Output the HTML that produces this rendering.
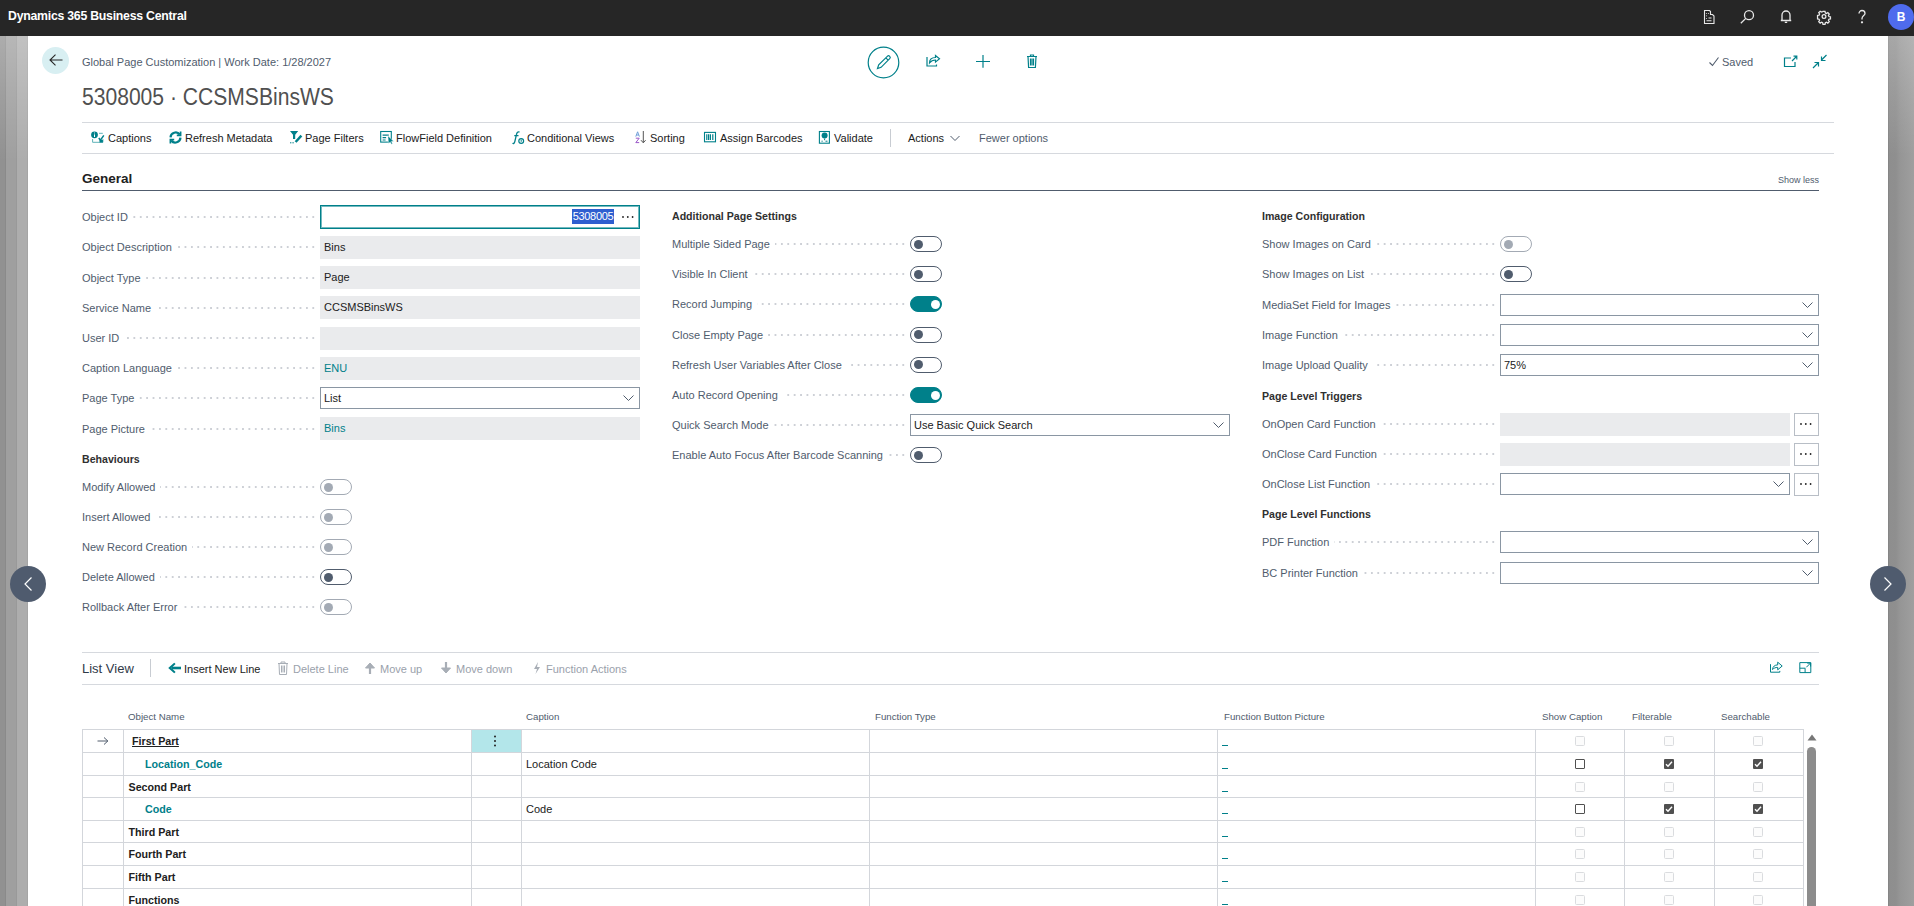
<!DOCTYPE html><html><head><meta charset='utf-8'><style>
*{box-sizing:border-box}
html,body{margin:0;padding:0}
body{width:1914px;height:906px;overflow:hidden;position:relative;background:#fff;font-family:"Liberation Sans",sans-serif;color:#212121;font-size:11px}
.a{position:absolute;white-space:nowrap}
svg.a{overflow:visible}
.lbl{position:absolute;height:16px;line-height:16px;width:234px;white-space:nowrap;
 background-image:radial-gradient(circle at 1px 1px,#cdd0d6 1px,transparent 1.2px);background-size:6.4px 2px;background-repeat:repeat-x;background-position:0.3px center}
.lbl span{background:#fff;color:#505c6d;padding-right:5px;display:inline-block;height:16px}
.fld{position:absolute;width:320px;height:23px;background:#eaebed;line-height:23px;padding-left:4px;color:#212121;white-space:nowrap}
.dd{position:absolute;width:320px;height:22px;border:1px solid #8a96a3;background:#fff;line-height:20px;padding-left:3px;color:#212121;white-space:nowrap}
.sub{position:absolute;font-weight:700;color:#303030;font-size:10.6px;line-height:14px;white-space:nowrap}
.tg{position:absolute;width:32px;height:16px;border-radius:8px;border:1px solid #505c6d;background:#fff}
.tg i{position:absolute;left:3px;top:2.5px;width:9px;height:9px;border-radius:50%;background:#505c6d}
.tg.dis{border-color:#a3aab4}
.tg.dis i{background:#a3aab4;left:2.5px;top:3px}
.tg.on{background:#00808a;border-color:#00808a}
.tg.on i{left:19.5px;top:2.5px;background:#fff}
.hl{position:absolute;height:1px;background:#d6d9de}
.vl{position:absolute;width:1px;background:#d6d9de}
.act{position:absolute;top:130px;height:16px;line-height:16px;color:#212121;white-space:nowrap}
.th{position:absolute;top:711px;font-size:9.7px;color:#505c6d;line-height:12px;white-space:nowrap}
.td{position:absolute;line-height:14px;white-space:nowrap}
</style></head><body>
<div class="a" style="left:0;top:0;width:1914px;height:36px;background:#262626"></div>
<div class="a" style="left:8px;top:8px;font-size:12.3px;font-weight:700;color:#fff;line-height:16px;letter-spacing:-0.25px">Dynamics 365 Business Central</div>
<svg class="a" style="left:1700px;top:8px" width="18" height="18" viewBox="0 0 18 18" fill="none" stroke="#e8e8e8" stroke-width="1.1">
<path d="M4.5 2.5h5l1 1v3h2l1.5 1.5v7.5h-9.5z"/><path d="M6.5 5v.8M6.5 7.5v.8M6.5 10v.8M8.5 5v.8M8.5 10h3M6.5 12.8h5"/></svg>
<svg class="a" style="left:1738px;top:8px" width="18" height="18" viewBox="0 0 18 18" fill="none" stroke="#e8e8e8" stroke-width="1.3">
<circle cx="11" cy="7.2" r="4.5"/><path d="M7.8 10.4L2.8 15.2"/></svg>
<svg class="a" style="left:1777px;top:7px" width="18" height="18" viewBox="0 0 18 18" fill="none" stroke="#e8e8e8" stroke-width="1.3">
<path d="M5 13V8a4 4 0 0 1 8 0v5M3.8 13.5h10.4M7.8 15.3h2.4"/></svg>
<svg class="a" style="left:1815px;top:7.5px;transform:scale(0.85);transform-origin:9px 8.5px" width="18" height="18" viewBox="0 0 18 18" fill="none" stroke="#e8e8e8" stroke-width="1.5">
<circle cx="9" cy="8.5" r="2.2"/><path d="M7.8 2.5h2.4l.4 1.8 1.3.6 1.6-1 1.7 1.7-1 1.6.6 1.3 1.8.4v2.4l-1.8.4-.6 1.3 1 1.6-1.7 1.7-1.6-1-1.3.6-.4 1.8H7.8l-.4-1.8-1.3-.6-1.6 1-1.7-1.7 1-1.6-.6-1.3-1.8-.4V7.3l1.8-.4.6-1.3-1-1.6 1.7-1.7 1.6 1 1.3-.6z"/></svg>
<svg class="a" style="left:1853px;top:8px" width="18" height="18" viewBox="0 0 18 18" fill="none" stroke="#e8e8e8" stroke-width="1.3">
<path d="M6 5.5a3 3 0 0 1 6 0c0 2-3 2.3-3 5v1"/><circle cx="9" cy="14.3" r="0.5" fill="#e8e8e8"/></svg>
<div class="a" style="left:1888px;top:4px;width:26px;height:26px;border-radius:50%;background:#4f6bed;color:#fff;font-weight:700;font-size:12px;line-height:26px;text-align:center">B</div>
<div class="a" style="left:0;top:36px;width:28px;height:870px;background:
linear-gradient(rgba(255,255,255,0.25) 0,rgba(255,255,255,0.12) 60px,rgba(255,255,255,0) 125px),
linear-gradient(90deg,#919191 0,#919191 5px,#8a8a8a 5px,#8a8a8a 6.5px,#9f9f9f 6.5px,#9f9f9f 16.2px,#999 16.2px,#999 17.2px,#adadad 17.2px,#adadad 27px,#a5a5a5 27px)"></div>
<div class="a" style="left:1888px;top:36px;width:26px;height:870px;background:
linear-gradient(rgba(255,255,255,0.22) 0,rgba(255,255,255,0.1) 60px,rgba(255,255,255,0) 120px),
linear-gradient(90deg,#858585 0,#858585 1.2px,#8e8e8e 1.2px,#8f8f8f 8px,#959595 45%,#9f9f9f)"></div>
<div class="a" style="left:41.5px;top:46.5px;width:27px;height:27px;border-radius:50%;background:#d8eff2"></div>
<svg class="a" style="left:41.5px;top:46.5px" width="27" height="27" viewBox="0 0 27 27" fill="none" stroke="#262626" stroke-width="1.1">
<path d="M20.5 13H8M13.5 7.7L8 13l5.5 5.3"/></svg>
<div class="a" style="left:82px;top:55px;font-size:11px;line-height:14px;color:#505c6d">Global Page Customization | Work Date: 1/28/2027</div>
<div class="a" style="left:82px;top:82.5px;font-size:23.5px;line-height:28px;color:#505050;transform:scaleX(0.897);transform-origin:0 0">5308005 · CCSMSBinsWS</div>
<svg class="a" style="left:866px;top:45px" width="36" height="36" viewBox="0 0 36 36" fill="none" stroke="#00808a" stroke-width="1.2">
<circle cx="17.5" cy="17.5" r="15.3"/>
<path d="M11.5 23.5l1.2-3.6 8.6-8.6a1.5 1.5 0 0 1 2.4 2.4l-8.6 8.6z M19.8 12.8l2.4 2.4"/></svg>
<svg class="a" style="left:924px;top:51px" width="18" height="18" viewBox="0 0 18 18" fill="none" stroke="#00808a" stroke-width="1.2">
<path d="M3 6v9h9.5v-1.5"/><path d="M5.5 12c0-3.5 2.5-5.5 6-5.5V4.5l4 3.3-4 3.3V9c-2.5 0-4.5 1-6 3z"/></svg>
<svg class="a" style="left:974px;top:52px" width="18" height="18" viewBox="0 0 18 18" fill="none" stroke="#00808a" stroke-width="1.2">
<path d="M9 3v12.8M2 9.5h14"/></svg>
<svg class="a" style="left:1023px;top:52px" width="18" height="18" viewBox="0 0 18 18" fill="none" stroke="#00808a" stroke-width="1.2">
<path d="M4 4.5h10M7.5 4.5V3h3v1.5M5 4.5l.6 11h6.8l.6-11M7.5 6.5v7M9 6.5v7M10.5 6.5v7"/></svg>
<svg class="a" style="left:1707px;top:54px" width="16" height="16" viewBox="0 0 16 16" fill="none" stroke="#505c6d" stroke-width="1.1">
<path d="M2.5 8.5l3 3 6-8"/></svg>
<div class="a" style="left:1722px;top:55px;font-size:11px;line-height:14px;color:#505c6d">Saved</div>
<svg class="a" style="left:1782px;top:53px" width="18" height="18" viewBox="0 0 18 18" fill="none" stroke="#00808a" stroke-width="1.2">
<path d="M9 5H2.5v8.5h10.5V9"/><path d="M10 8l4.5-4.5M11.5 3.2h3.3v3.3"/></svg>
<svg class="a" style="left:1810px;top:52px" width="20" height="20" viewBox="0 0 20 20" fill="none" stroke="#00808a" stroke-width="1.2">
<path d="M3 16l5-5M4.5 10.5H8.5V14.5M16.5 3l-5 5M11.5 4.5v4h4"/></svg>
<div class="hl" style="left:82px;top:122px;width:1752px"></div>
<div class="hl" style="left:82px;top:153px;width:1752px"></div>
<div class="act" style="left:108px;color:#212121">Captions</div>
<div class="act" style="left:185px;color:#212121">Refresh Metadata</div>
<div class="act" style="left:305px;color:#212121">Page Filters</div>
<div class="act" style="left:396px;color:#212121">FlowField Definition</div>
<div class="act" style="left:527px;color:#212121">Conditional Views</div>
<div class="act" style="left:650px;color:#212121">Sorting</div>
<div class="act" style="left:720px;color:#212121">Assign Barcodes</div>
<div class="act" style="left:834px;color:#212121">Validate</div>
<div class="act" style="left:908px;color:#212121">Actions</div>
<div class="act" style="left:979px;color:#505c6d">Fewer options</div>
<div class="vl" style="left:890px;top:129px;height:18px;background:#c8ccd2"></div>
<svg class="a" style="left:949px;top:134px" width="12" height="8" viewBox="0 0 12 8" fill="none" stroke="#505c6d" stroke-width="1"><path d="M1.5 2l4.5 4.5 4.5-4.5"/></svg>
<svg class="a" style="left:0;top:0" width="1914" height="160" viewBox="0 0 1914 160">
<g>
<circle cx="94.5" cy="134.8" r="3.4" fill="#00808a"/><path d="M94.5 132.6v.8M94.5 134.4v2.6" stroke="#fff" stroke-width="1"/>
<path d="M99 133.3h3.8" stroke="#5fb3b8" stroke-width="1"/>
<path d="M98.8 138l1.6 2.2 3.4-4.8" stroke="#00808a" stroke-width="1.5" fill="none"/>
<path d="M92.6 139v3.3h10.3V139" stroke="#5fb3b8" stroke-width="1" fill="none"/><rect x="99.5" y="140" width="3.4" height="2.5" fill="#00808a"/>
</g>
<g fill="none" stroke="#00808a" stroke-width="2.2">
<path d="M170.5 137.3a5.2 5.2 0 0 1 9.3-2.8M180.5 137.7a5.2 5.2 0 0 1-9.3 2.8"/>
<path d="M180.6 131.5v3.8h-3.8M170.4 143.5v-3.8h3.8" stroke-width="1.7"/>
</g>
<path d="M290 131h8.2l-3 3.8v4.2h-2.2v-4.2z" fill="#00808a"/>
<path d="M301.4 135.6l-5.8 6.4" stroke="#00808a" stroke-width="2.4"/>
<path d="M290 142.8h4.5" stroke="#00808a" stroke-width="1" stroke-dasharray="1.4 1"/>
<rect x="380.7" y="131.5" width="10.6" height="10.6" fill="none" stroke="#00808a" stroke-width="1.1"/>
<path d="M382.6 135.2h6.2M382.6 137.6h3.5M382.6 140h3" stroke="#00808a" stroke-width="1.2"/>
<path d="M387.9 135.8l5.8 5.4-2.4.2 1.3 2.3-1.1.6-1.3-2.3-1.8 1.6z" fill="#00808a" stroke="#fff" stroke-width="0.5"/>
<path d="M519.5 132.2c-1.6-.8-2.6.2-3 2.2l-1.7 7.2c-.4 1.8-1.3 2.3-2.3 1.6M514.3 135.6h4.2" fill="none" stroke="#00808a" stroke-width="1.3"/>
<circle cx="521.2" cy="141" r="2.4" fill="none" stroke="#00808a" stroke-width="1.2"/><path d="M521.2 139.6v2.2" stroke="#00808a" stroke-width="1"/>
<path d="M635.8 136.6l1.8-4.8 1.8 4.8M636.4 135h2.4" fill="none" stroke="#6f9fd8" stroke-width="1"/>
<path d="M635.8 138.2h3.4l-3.4 4.4h3.4" fill="none" stroke="#9b59c9" stroke-width="1"/>
<path d="M643.3 131v11.6M641 140.2l2.3 2.6 2.3-2.6" fill="none" stroke="#555" stroke-width="1"/>
<rect x="704.5" y="132.4" width="11" height="9.4" fill="none" stroke="#00808a" stroke-width="1.1"/>
<path d="M706.8 134.3v5.6M708.6 134.3v5.6M710.4 134.3v5.6M712.8 134.3v5.6" stroke="#00808a" stroke-width="1.2"/>
<rect x="819.4" y="131.5" width="10" height="11.7" fill="none" stroke="#00808a" stroke-width="1.1"/>
<circle cx="824.6" cy="135.6" r="3" fill="#00808a"/><path d="M824.6 138.6v1.6M821.5 141.2h1.2M825.5 141.2h2" stroke="#00808a" stroke-width="1"/>
</svg>
<div class="a" style="left:82px;top:171px;font-size:13.5px;font-weight:700;line-height:16px;color:#212121">General</div>
<div class="a" style="left:82px;top:190px;width:1737px;height:1px;background:#505c6d"></div>
<div class="a" style="left:1778px;top:174px;font-size:9px;line-height:12px;color:#505c6d">Show less</div>
<div class="lbl" style="left:82px;top:209px"><span>Object ID</span></div>
<div class="a" style="left:320px;top:205px;width:320px;height:24px;border:1px solid #00808a;box-shadow:inset 0 0 0 1px rgba(0,128,138,0.55);background:#fff"></div>
<div class="a" style="left:572px;top:209px;width:42px;height:15px;background:#2f5fd0;color:#fff;line-height:15px;font-size:11px;text-align:center;letter-spacing:-0.3px">5308005</div>
<svg class="a" style="left:621px;top:215px" width="14" height="4" viewBox="0 0 14 4"><circle cx="2" cy="2" r="0.9" fill="#212121"/><circle cx="6.8" cy="2" r="0.9" fill="#212121"/><circle cx="11.6" cy="2" r="0.9" fill="#212121"/></svg>
<div class="lbl" style="left:82px;top:239.3px"><span>Object Description</span></div>
<div class="fld" style="left:320px;top:235.8px;width:320px;color:#212121">Bins</div>
<div class="lbl" style="left:82px;top:269.6px"><span>Object Type</span></div>
<div class="fld" style="left:320px;top:266.1px;width:320px;color:#212121">Page</div>
<div class="lbl" style="left:82px;top:299.8px"><span>Service Name</span></div>
<div class="fld" style="left:320px;top:296.3px;width:320px;color:#212121">CCSMSBinsWS</div>
<div class="lbl" style="left:82px;top:330px"><span>User ID</span></div>
<div class="fld" style="left:320px;top:326.5px;width:320px;color:#212121"></div>
<div class="lbl" style="left:82px;top:360px"><span>Caption Language</span></div>
<div class="fld" style="left:320px;top:356.5px;width:320px;color:#00808a">ENU</div>
<div class="lbl" style="left:82px;top:390px"><span>Page Type</span></div>
<div class="dd" style="left:320px;top:387px;width:320px">List<svg class="a" style="right:5px;top:7px" width="11" height="6" viewBox="0 0 11 6" fill="none" stroke="#505c6d" stroke-width="1"><path d="M.5 .5l5 5 5-5"/></svg></div>
<div class="lbl" style="left:82px;top:420.5px"><span>Page Picture</span></div>
<div class="fld" style="left:320px;top:417.0px;width:320px;color:#00808a">Bins</div>
<div class="sub" style="left:82px;top:452px">Behaviours</div>
<div class="lbl" style="left:82px;top:479px"><span>Modify Allowed</span></div>
<div class="tg dis" style="left:320px;top:479px"><i></i></div>
<div class="lbl" style="left:82px;top:509px"><span>Insert Allowed</span></div>
<div class="tg dis" style="left:320px;top:509px"><i></i></div>
<div class="lbl" style="left:82px;top:539px"><span>New Record Creation</span></div>
<div class="tg dis" style="left:320px;top:539px"><i></i></div>
<div class="lbl" style="left:82px;top:569px"><span>Delete Allowed</span></div>
<div class="tg" style="left:320px;top:569px"><i></i></div>
<div class="lbl" style="left:82px;top:599px"><span>Rollback After Error</span></div>
<div class="tg dis" style="left:320px;top:599px"><i></i></div>
<div class="sub" style="left:672px;top:209px">Additional Page Settings</div>
<div class="lbl" style="left:672px;top:236px"><span>Multiple Sided Page</span></div>
<div class="tg" style="left:910px;top:236px"><i></i></div>
<div class="lbl" style="left:672px;top:266px"><span>Visible In Client</span></div>
<div class="tg" style="left:910px;top:266px"><i></i></div>
<div class="lbl" style="left:672px;top:296px"><span>Record Jumping</span></div>
<div class="tg on" style="left:910px;top:296px"><i></i></div>
<div class="lbl" style="left:672px;top:326.5px"><span>Close Empty Page</span></div>
<div class="tg" style="left:910px;top:326.5px"><i></i></div>
<div class="lbl" style="left:672px;top:356.5px"><span>Refresh User Variables After Close</span></div>
<div class="tg" style="left:910px;top:356.5px"><i></i></div>
<div class="lbl" style="left:672px;top:387px"><span>Auto Record Opening</span></div>
<div class="tg on" style="left:910px;top:387px"><i></i></div>
<div class="lbl" style="left:672px;top:417px"><span>Quick Search Mode</span></div>
<div class="dd" style="left:910px;top:414px;width:320px">Use Basic Quick Search<svg class="a" style="right:5px;top:7px" width="11" height="6" viewBox="0 0 11 6" fill="none" stroke="#505c6d" stroke-width="1"><path d="M.5 .5l5 5 5-5"/></svg></div>
<div class="lbl" style="left:672px;top:447px"><span>Enable Auto Focus After Barcode Scanning</span></div>
<div class="tg" style="left:910px;top:447px"><i></i></div>
<div class="sub" style="left:1262px;top:209px">Image Configuration</div>
<div class="lbl" style="left:1262px;top:236px"><span>Show Images on Card</span></div>
<div class="tg dis" style="left:1500px;top:236px"><i></i></div>
<div class="lbl" style="left:1262px;top:266px"><span>Show Images on List</span></div>
<div class="tg" style="left:1500px;top:266px"><i></i></div>
<div class="lbl" style="left:1262px;top:296.5px"><span>MediaSet Field for Images</span></div>
<div class="dd" style="left:1500px;top:293.5px;width:319px"><svg class="a" style="right:5px;top:7px" width="11" height="6" viewBox="0 0 11 6" fill="none" stroke="#505c6d" stroke-width="1"><path d="M.5 .5l5 5 5-5"/></svg></div>
<div class="lbl" style="left:1262px;top:327px"><span>Image Function</span></div>
<div class="dd" style="left:1500px;top:324px;width:319px"><svg class="a" style="right:5px;top:7px" width="11" height="6" viewBox="0 0 11 6" fill="none" stroke="#505c6d" stroke-width="1"><path d="M.5 .5l5 5 5-5"/></svg></div>
<div class="lbl" style="left:1262px;top:357px"><span>Image Upload Quality</span></div>
<div class="dd" style="left:1500px;top:354px;width:319px">75%<svg class="a" style="right:5px;top:7px" width="11" height="6" viewBox="0 0 11 6" fill="none" stroke="#505c6d" stroke-width="1"><path d="M.5 .5l5 5 5-5"/></svg></div>
<div class="sub" style="left:1262px;top:389px">Page Level Triggers</div>
<div class="lbl" style="left:1262px;top:416px"><span>OnOpen Card Function</span></div>
<div class="fld" style="left:1500px;top:412.5px;width:290px;color:#212121"></div>
<div class="a" style="left:1794px;top:412.5px;width:25px;height:23px;border:1px solid #b8bec6;background:#fff"></div>
<svg class="a" style="left:1799px;top:422px" width="14" height="4" viewBox="0 0 14 4"><circle cx="2" cy="2" r="0.9" fill="#212121"/><circle cx="6.8" cy="2" r="0.9" fill="#212121"/><circle cx="11.6" cy="2" r="0.9" fill="#212121"/></svg>
<div class="lbl" style="left:1262px;top:446px"><span>OnClose Card Function</span></div>
<div class="fld" style="left:1500px;top:442.5px;width:290px;color:#212121"></div>
<div class="a" style="left:1794px;top:442.5px;width:25px;height:23px;border:1px solid #b8bec6;background:#fff"></div>
<svg class="a" style="left:1799px;top:452px" width="14" height="4" viewBox="0 0 14 4"><circle cx="2" cy="2" r="0.9" fill="#212121"/><circle cx="6.8" cy="2" r="0.9" fill="#212121"/><circle cx="11.6" cy="2" r="0.9" fill="#212121"/></svg>
<div class="lbl" style="left:1262px;top:476px"><span>OnClose List Function</span></div>
<div class="dd" style="left:1500px;top:473px;width:290px"><svg class="a" style="right:5px;top:7px" width="11" height="6" viewBox="0 0 11 6" fill="none" stroke="#505c6d" stroke-width="1"><path d="M.5 .5l5 5 5-5"/></svg></div>
<div class="a" style="left:1794px;top:472.5px;width:25px;height:23px;border:1px solid #b8bec6;background:#fff"></div>
<svg class="a" style="left:1799px;top:482px" width="14" height="4" viewBox="0 0 14 4"><circle cx="2" cy="2" r="0.9" fill="#212121"/><circle cx="6.8" cy="2" r="0.9" fill="#212121"/><circle cx="11.6" cy="2" r="0.9" fill="#212121"/></svg>
<div class="sub" style="left:1262px;top:507px">Page Level Functions</div>
<div class="lbl" style="left:1262px;top:534px"><span>PDF Function</span></div>
<div class="dd" style="left:1500px;top:531px;width:319px"><svg class="a" style="right:5px;top:7px" width="11" height="6" viewBox="0 0 11 6" fill="none" stroke="#505c6d" stroke-width="1"><path d="M.5 .5l5 5 5-5"/></svg></div>
<div class="lbl" style="left:1262px;top:565px"><span>BC Printer Function</span></div>
<div class="dd" style="left:1500px;top:562px;width:319px"><svg class="a" style="right:5px;top:7px" width="11" height="6" viewBox="0 0 11 6" fill="none" stroke="#505c6d" stroke-width="1"><path d="M.5 .5l5 5 5-5"/></svg></div>
<div class="a" style="left:10px;top:566px;width:36px;height:36px;border-radius:50%;background:#4f5b6e"></div>
<div class="a" style="left:1870px;top:566px;width:36px;height:36px;border-radius:50%;background:#4f5b6e"></div>
<svg class="a" style="left:0;top:0" width="1914" height="906" viewBox="0 0 1914 906" fill="none" stroke="#fff" stroke-width="1.2"><path d="M31.5 577.5l-6.5 6.5 6.5 6.5M1884.5 577.5l6.5 6.5-6.5 6.5"/></svg>
<div class="hl" style="left:82px;top:652px;width:1737px"></div>
<div class="hl" style="left:82px;top:684px;width:1737px"></div>
<div class="a" style="left:82px;top:661px;font-size:13px;line-height:16px;color:#2f3a48">List View</div>
<div class="vl" style="left:150px;top:659px;height:18px;background:#c8ccd2"></div>
<div class="a" style="left:184px;top:662px;line-height:14px;color:#212121">Insert New Line</div>
<div class="a" style="left:293px;top:662px;line-height:14px;color:#9aa1ab">Delete Line</div>
<div class="a" style="left:380px;top:662px;line-height:14px;color:#9aa1ab">Move up</div>
<div class="a" style="left:456px;top:662px;line-height:14px;color:#9aa1ab">Move down</div>
<div class="a" style="left:546px;top:662px;line-height:14px;color:#9aa1ab">Function Actions</div>
<svg class="a" style="left:166px;top:661px" width="16" height="14" viewBox="0 0 16 14"><path d="M15 7H6" stroke="#00808a" stroke-width="2.6"/><path d="M8.2 1.8L2.2 7l6 5.2 1.4-1.3L5.5 7l4.1-3.9z" fill="#00808a"/></svg>
<svg class="a" style="left:276px;top:660px" width="14" height="16" viewBox="0 0 14 16" fill="none" stroke="#a8aeb6" stroke-width="1"><path d="M2 3.5h10M5 3.5V2h4v1.5M3 3.5l.5 11h7l.5-11M5.5 5.5v7M7 5.5v7M8.5 5.5v7"/></svg>
<svg class="a" style="left:363px;top:661px" width="14" height="14" viewBox="0 0 14 14" fill="#a8aeb6" stroke="#a8aeb6" stroke-width="2.2"><path d="M7 13V5" fill="none"/><path d="M2.5 7L7 2l4.5 5z" stroke-width="1"/></svg>
<svg class="a" style="left:439px;top:661px" width="14" height="14" viewBox="0 0 14 14" fill="#a8aeb6" stroke="#a8aeb6" stroke-width="2.2"><path d="M7 1v8" fill="none"/><path d="M2.5 7L7 12l4.5-5z" stroke-width="1"/></svg>
<svg class="a" style="left:531px;top:661px" width="12" height="14" viewBox="0 0 12 14" fill="#a8aeb6"><path d="M7 1L3 8h3l-1.5 5L9 6H6z"/></svg>
<svg class="a" style="left:0;top:0" width="1914" height="906" viewBox="0 0 1914 906" fill="none" stroke="#00808a" stroke-width="1"><path d="M1770.5 664.2v8h9.3v-1.3"/><path d="M1772.5 669.5c.3-3 2.3-4.6 5.2-4.6v-2.7l4.5 3.8-4.5 3.8v-2.4c-2.2 0-3.8.7-5.2 2.1z"/><path d="M1799.8 662.6h11v10h-11z"/><path d="M1799.8 668.2h5.3v4.4M1806.3 667.3l4-4M1807.2 663.1h3.4v3.4"/></svg>
<div class="th" style="left:128px">Object Name</div>
<div class="th" style="left:526px">Caption</div>
<div class="th" style="left:875px">Function Type</div>
<div class="th" style="left:1224px">Function Button Picture</div>
<div class="th" style="left:1542px">Show Caption</div>
<div class="th" style="left:1632px">Filterable</div>
<div class="th" style="left:1721px">Searchable</div>
<div class="hl" style="left:82px;top:729px;width:1721px;background:#d3d6db"></div>
<div class="hl" style="left:82px;top:752px;width:1721px;background:#d3d6db"></div>
<div class="hl" style="left:82px;top:775px;width:1721px;background:#d3d6db"></div>
<div class="hl" style="left:82px;top:797px;width:1721px;background:#d3d6db"></div>
<div class="hl" style="left:82px;top:820px;width:1721px;background:#d3d6db"></div>
<div class="hl" style="left:82px;top:842px;width:1721px;background:#d3d6db"></div>
<div class="hl" style="left:82px;top:865px;width:1721px;background:#d3d6db"></div>
<div class="hl" style="left:82px;top:888px;width:1721px;background:#d3d6db"></div>
<div class="hl" style="left:82px;top:911px;width:1721px;background:#d3d6db"></div>
<div class="vl" style="left:82px;top:729px;height:180px;background:#d3d6db"></div>
<div class="vl" style="left:123px;top:729px;height:180px;background:#d3d6db"></div>
<div class="vl" style="left:471px;top:729px;height:180px;background:#d3d6db"></div>
<div class="vl" style="left:521px;top:729px;height:180px;background:#d3d6db"></div>
<div class="vl" style="left:869px;top:729px;height:180px;background:#d3d6db"></div>
<div class="vl" style="left:1217px;top:729px;height:180px;background:#d3d6db"></div>
<div class="vl" style="left:1535px;top:729px;height:180px;background:#d3d6db"></div>
<div class="vl" style="left:1624px;top:729px;height:180px;background:#d3d6db"></div>
<div class="vl" style="left:1714px;top:729px;height:180px;background:#d3d6db"></div>
<div class="vl" style="left:1803px;top:729px;height:180px;background:#d3d6db"></div>
<div class="a" style="left:472px;top:730px;width:49px;height:22px;background:#b3e6ea"></div>
<svg class="a" style="left:490px;top:733px" width="10" height="16" viewBox="0 0 10 16" fill="#212121"><circle cx="5" cy="3.5" r="1"/><circle cx="5" cy="8" r="1"/><circle cx="5" cy="12.5" r="1"/></svg>
<svg class="a" style="left:96px;top:736px" width="14" height="10" viewBox="0 0 14 10" fill="none" stroke="#505c6d" stroke-width="1"><path d="M1.5 5h10.5M8 1.5L11.8 5 8 8.5"/></svg>
<div class="td" style="left:132px;top:734.1px;font-weight:700;font-size:10.7px;color:#212121;text-decoration:underline;">First Part</div>
<div class="td" style="left:145px;top:757.1px;font-weight:700;font-size:10.7px;color:#00808a;">Location_Code</div>
<div class="td" style="left:128.5px;top:780.1px;font-weight:700;font-size:10.7px;color:#212121;">Second Part</div>
<div class="td" style="left:145px;top:802.1px;font-weight:700;font-size:10.7px;color:#00808a;">Code</div>
<div class="td" style="left:128.5px;top:825.1px;font-weight:700;font-size:10.7px;color:#212121;">Third Part</div>
<div class="td" style="left:128.5px;top:847.1px;font-weight:700;font-size:10.7px;color:#212121;">Fourth Part</div>
<div class="td" style="left:128.5px;top:870.1px;font-weight:700;font-size:10.7px;color:#212121;">Fifth Part</div>
<div class="td" style="left:128.5px;top:893.1px;font-weight:700;font-size:10.7px;color:#212121;">Functions</div>
<div class="td" style="left:526px;top:757.1px;font-size:11px;color:#212121">Location Code</div>
<div class="td" style="left:526px;top:802.1px;font-size:11px;color:#212121">Code</div>
<div class="a" style="left:1222px;top:745px;width:6px;height:1px;background:#00808a"></div>
<div class="a" style="left:1575px;top:736.1px;width:10px;height:10px;border:1px solid #dadcdf;border-radius:1.5px;background:#fcfcfc"></div>
<div class="a" style="left:1664px;top:736.1px;width:10px;height:10px;border:1px solid #dadcdf;border-radius:1.5px;background:#fcfcfc"></div>
<div class="a" style="left:1753px;top:736.1px;width:10px;height:10px;border:1px solid #dadcdf;border-radius:1.5px;background:#fcfcfc"></div>
<div class="a" style="left:1222px;top:768px;width:6px;height:1px;background:#00808a"></div>
<div class="a" style="left:1575px;top:759.1px;width:10px;height:10px;border:1px solid #505050;border-radius:1px"></div>
<svg class="a" style="left:1664px;top:759.1px" width="10" height="10" viewBox="0 0 10 10"><rect x="0" y="0" width="10" height="10" rx="1" fill="#505050"/><path d="M2 5.2l2 2 4-4.5" fill="none" stroke="#fff" stroke-width="1.4"/></svg>
<svg class="a" style="left:1753px;top:759.1px" width="10" height="10" viewBox="0 0 10 10"><rect x="0" y="0" width="10" height="10" rx="1" fill="#505050"/><path d="M2 5.2l2 2 4-4.5" fill="none" stroke="#fff" stroke-width="1.4"/></svg>
<div class="a" style="left:1222px;top:791px;width:6px;height:1px;background:#00808a"></div>
<div class="a" style="left:1575px;top:782.1px;width:10px;height:10px;border:1px solid #dadcdf;border-radius:1.5px;background:#fcfcfc"></div>
<div class="a" style="left:1664px;top:782.1px;width:10px;height:10px;border:1px solid #dadcdf;border-radius:1.5px;background:#fcfcfc"></div>
<div class="a" style="left:1753px;top:782.1px;width:10px;height:10px;border:1px solid #dadcdf;border-radius:1.5px;background:#fcfcfc"></div>
<div class="a" style="left:1222px;top:813px;width:6px;height:1px;background:#00808a"></div>
<div class="a" style="left:1575px;top:804.1px;width:10px;height:10px;border:1px solid #505050;border-radius:1px"></div>
<svg class="a" style="left:1664px;top:804.1px" width="10" height="10" viewBox="0 0 10 10"><rect x="0" y="0" width="10" height="10" rx="1" fill="#505050"/><path d="M2 5.2l2 2 4-4.5" fill="none" stroke="#fff" stroke-width="1.4"/></svg>
<svg class="a" style="left:1753px;top:804.1px" width="10" height="10" viewBox="0 0 10 10"><rect x="0" y="0" width="10" height="10" rx="1" fill="#505050"/><path d="M2 5.2l2 2 4-4.5" fill="none" stroke="#fff" stroke-width="1.4"/></svg>
<div class="a" style="left:1222px;top:836px;width:6px;height:1px;background:#00808a"></div>
<div class="a" style="left:1575px;top:827.1px;width:10px;height:10px;border:1px solid #dadcdf;border-radius:1.5px;background:#fcfcfc"></div>
<div class="a" style="left:1664px;top:827.1px;width:10px;height:10px;border:1px solid #dadcdf;border-radius:1.5px;background:#fcfcfc"></div>
<div class="a" style="left:1753px;top:827.1px;width:10px;height:10px;border:1px solid #dadcdf;border-radius:1.5px;background:#fcfcfc"></div>
<div class="a" style="left:1222px;top:858px;width:6px;height:1px;background:#00808a"></div>
<div class="a" style="left:1575px;top:849.1px;width:10px;height:10px;border:1px solid #dadcdf;border-radius:1.5px;background:#fcfcfc"></div>
<div class="a" style="left:1664px;top:849.1px;width:10px;height:10px;border:1px solid #dadcdf;border-radius:1.5px;background:#fcfcfc"></div>
<div class="a" style="left:1753px;top:849.1px;width:10px;height:10px;border:1px solid #dadcdf;border-radius:1.5px;background:#fcfcfc"></div>
<div class="a" style="left:1222px;top:881px;width:6px;height:1px;background:#00808a"></div>
<div class="a" style="left:1575px;top:872.1px;width:10px;height:10px;border:1px solid #dadcdf;border-radius:1.5px;background:#fcfcfc"></div>
<div class="a" style="left:1664px;top:872.1px;width:10px;height:10px;border:1px solid #dadcdf;border-radius:1.5px;background:#fcfcfc"></div>
<div class="a" style="left:1753px;top:872.1px;width:10px;height:10px;border:1px solid #dadcdf;border-radius:1.5px;background:#fcfcfc"></div>
<div class="a" style="left:1222px;top:904px;width:6px;height:1px;background:#00808a"></div>
<div class="a" style="left:1575px;top:895.1px;width:10px;height:10px;border:1px solid #dadcdf;border-radius:1.5px;background:#fcfcfc"></div>
<div class="a" style="left:1664px;top:895.1px;width:10px;height:10px;border:1px solid #dadcdf;border-radius:1.5px;background:#fcfcfc"></div>
<div class="a" style="left:1753px;top:895.1px;width:10px;height:10px;border:1px solid #dadcdf;border-radius:1.5px;background:#fcfcfc"></div>
<svg class="a" style="left:1806.5px;top:733px" width="10" height="8" viewBox="0 0 10 8"><path d="M0.5 7.5L5 1.5l4.5 6z" fill="#777"/></svg>
<div class="a" style="left:1807px;top:746.5px;width:9px;height:170px;border-radius:4.5px;background:#8c8c8c"></div>
</body></html>
